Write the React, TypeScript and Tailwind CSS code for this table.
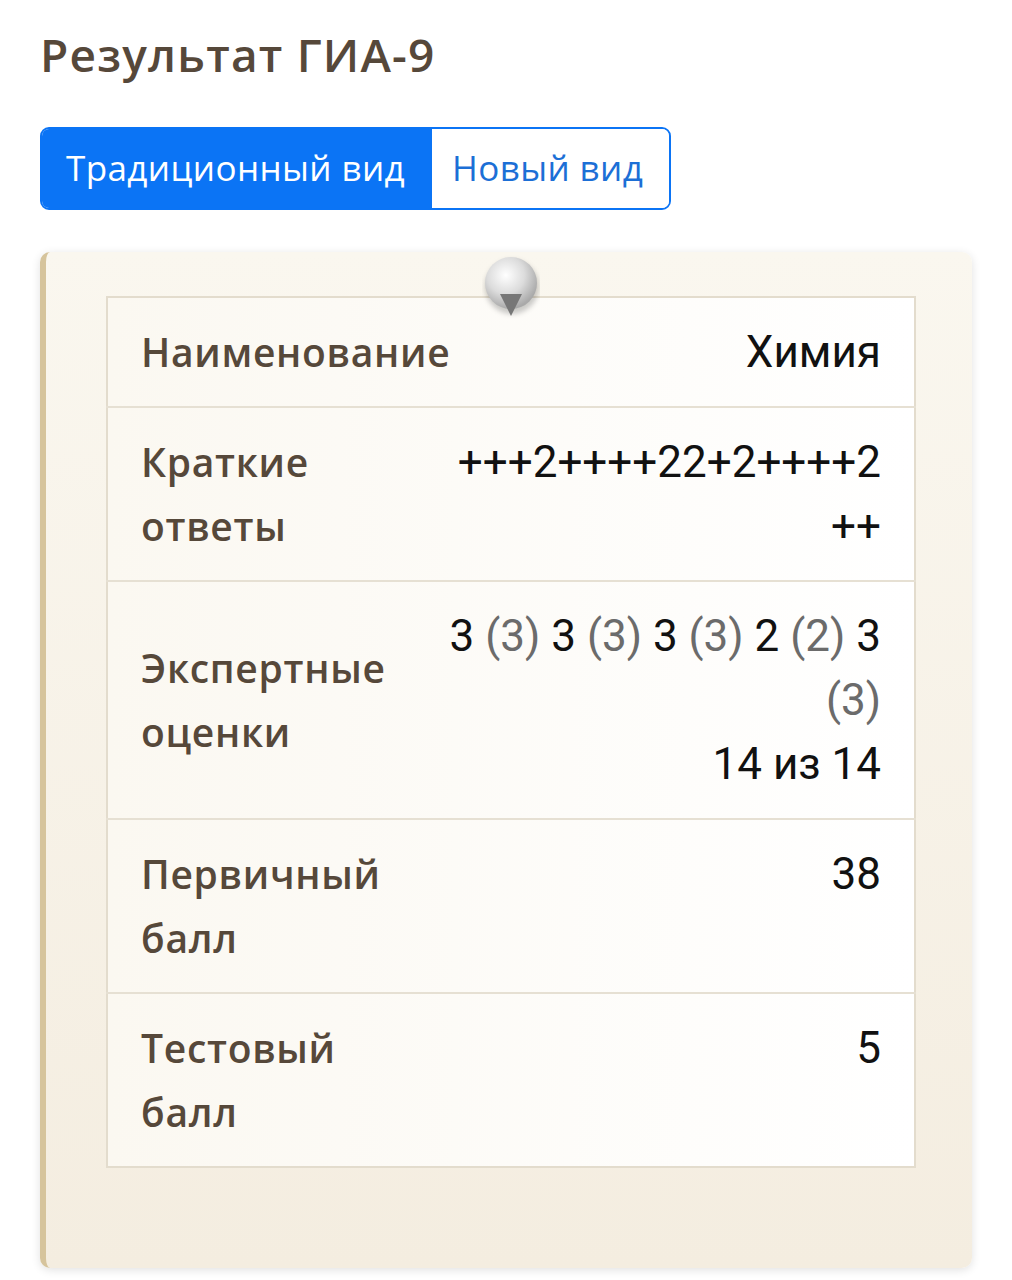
import React from "react";

const labelCls =
  "align-middle pl-[33px] pr-0 py-[22px] text-[39px] tracking-[0.7px] leading-[64px] font-semibold text-[#56483a]";
const valueCls =
  "align-top pr-[33px] pl-[20px] py-[22px] text-right text-[44px] leading-[64px] text-[#111]";

function G({ children }: { children: React.ReactNode }) {
  return <span className="text-[#6b6b6b]">{children}</span>;
}

export default function App() {
  return (
    <div className="w-[1012px] h-[1280px] bg-white overflow-hidden" style={{ fontFamily: "'Open Sans', 'Noto Sans', sans-serif" }}>
      <div className="pl-[40px] pt-[24px]">
        <h1 className="text-[46px] tracking-[1.2px] leading-[60px] font-semibold text-[#56483a]">Результат ГИА-9</h1>
      </div>
      <div className="pl-[40px] mt-[43px] flex">
        <div className="flex h-[83px] rounded-[9px] border-2 border-[#0b74f5] overflow-hidden">
          <div className="bg-[#0b74f5] text-white text-[35px] tracking-[0.4px] flex items-center pl-[24px] w-[390px]">Традиционный вид</div>
          <div className="bg-white text-[#1c6fd6] text-[35px] tracking-[0.4px] flex items-center pl-[20px] w-[237px]">Новый вид</div>
        </div>
      </div>
      <div className="ml-[40px] mt-[42px] w-[932px] h-[1016px] relative rounded-[10px] border-l-[6px] border-[#d6c49c] bg-gradient-to-b from-[#faf7ef] to-[#f4ede0] shadow-[0_2px_10px_rgba(0,0,0,0.12)] pt-[44px] pl-[60px]">
        <div className="absolute left-[436px] top-[2px] w-[58px] h-[70px] z-10">
          <svg width="58" height="70" viewBox="0 0 58 70">
            <defs>
              <radialGradient id="pg" cx="40%" cy="35%" r="65%">
                <stop offset="0%" stopColor="#ffffff" />
                <stop offset="55%" stopColor="#dcdcdc" />
                <stop offset="100%" stopColor="#a9a9a9" />
              </radialGradient>
              <filter id="ps" x="-30%" y="-30%" width="160%" height="160%">
                <feGaussianBlur stdDeviation="2.5" />
              </filter>
            </defs>
            <circle cx="30" cy="33" r="27" fill="rgba(0,0,0,0.2)" filter="url(#ps)" />
            <circle cx="29" cy="29" r="26" fill="url(#pg)" />
            <polygon points="18,40 40,40 29,62" fill="#777777" />
          </svg>
        </div>
        <table className="w-[810px] table-fixed border-collapse border-2 border-[#e3dccd] bg-gradient-to-r from-[#fbf8f1] to-white">
          <colgroup>
            <col className="w-[284px]" />
            <col />
          </colgroup>
          <tbody>
            <tr className="border-b-2 border-[#e6e0d3]">
              <td className={labelCls + " whitespace-nowrap overflow-visible"}>Наименование</td>
              <td className={valueCls + " !align-middle"} style={{ fontFamily: "Roboto, sans-serif" }}>Химия</td>
            </tr>
            <tr className="border-b-2 border-[#e6e0d3]">
              <td className={labelCls}>Краткие ответы</td>
              <td className={valueCls} style={{ fontFamily: "Roboto, sans-serif" }}>+++2++++22+2++++2 ++</td>
            </tr>
            <tr className="border-b-2 border-[#e6e0d3]">
              <td className={labelCls}>Экспертные оценки</td>
              <td className={valueCls} style={{ fontFamily: "Roboto, sans-serif" }}>
                3 <G>(3)</G> 3 <G>(3)</G> 3 <G>(3)</G> 2 <G>(2)</G> 3 <G>(3)</G>
                <br />
                14 из 14
              </td>
            </tr>
            <tr className="border-b-2 border-[#e6e0d3]">
              <td className={labelCls}>Первичный балл</td>
              <td className={valueCls} style={{ fontFamily: "Roboto, sans-serif" }}>38</td>
            </tr>
            <tr>
              <td className={labelCls}>Тестовый балл</td>
              <td className={valueCls} style={{ fontFamily: "Roboto, sans-serif" }}>5</td>
            </tr>
          </tbody>
        </table>
      </div>
    </div>
  );
}
